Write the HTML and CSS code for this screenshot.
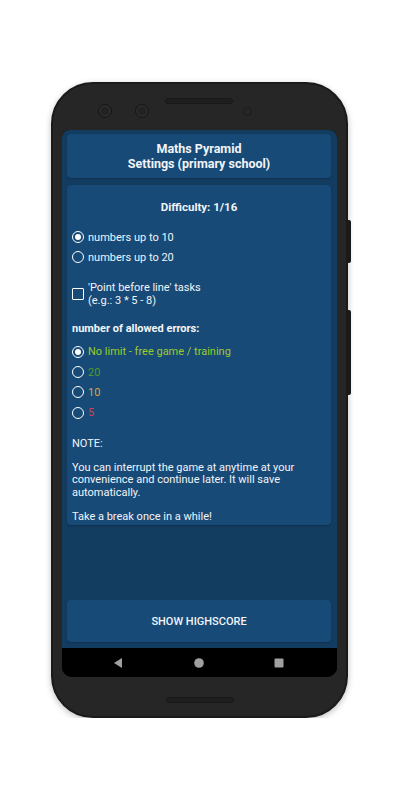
FILE: index.html
```html
<!DOCTYPE html>
<html lang="en">
<head>
  <meta charset="UTF-8">
  <meta name="viewport" content="width=device-width, initial-scale=1.0">
  <title>Maths Pyramid - Settings</title>
  <link rel="stylesheet" href="styles.css">
</head>
<body>

  <div class="phone">
    <div class="bezel-top">
      <span class="camera cam-one"></span>
      <span class="camera cam-two"></span>
      <span class="speaker"></span>
      <span class="sensor"></span>
    </div>

    <div class="screen">
      <div class="app">
        <div class="card header-card">
          <div>Maths Pyramid</div>
          <div>Settings (primary school)</div>
        </div>

        <div class="card settings-card">
          <div class="difficulty">Difficulty: 1/16</div>

          <div class="group range-group">
            <label class="option"><span class="radio checked"></span>numbers up to 10</label>
            <label class="option"><span class="radio"></span>numbers up to 20</label>
          </div>

          <label class="check-option">
            <span class="checkbox"></span>
            <span>'Point before line' tasks<br>(e.g.: 3 * 5 - 8)</span>
          </label>

          <div class="section-title">number of allowed errors:</div>

          <div class="group">
            <label class="option lime"><span class="radio checked"></span>No limit - free game / training</label>
            <label class="option green"><span class="radio"></span>20</label>
            <label class="option orange"><span class="radio"></span>10</label>
            <label class="option red"><span class="radio"></span>5</label>
          </div>

          <p class="note">NOTE:

You can interrupt the game at anytime at your convenience and continue later. It will save automatically.

Take a break once in a while!</p>
        </div>

        <div class="spacer"></div>

        <button class="card highscore-button">SHOW HIGHSCORE</button>
      </div>

      <div class="nav-bar">
        <svg class="nav-icon" width="12" height="12" viewBox="0 0 12 12"><path d="M10 1 L10 11 L2 6 Z" fill="#a0a0a0"/></svg>
        <svg class="nav-icon" width="12" height="12" viewBox="0 0 12 12"><circle cx="6" cy="6" r="4.8" fill="#a0a0a0"/></svg>
        <svg class="nav-icon" width="12" height="12" viewBox="0 0 12 12"><rect x="1.5" y="1.5" width="9" height="9" rx="1" fill="#a0a0a0"/></svg>
      </div>
    </div>

    <div class="bezel-bottom">
      <span class="speaker"></span>
    </div>
  </div>

</body>
</html>
```

FILE: styles.css
```css
/* Page and phone frame */
body {
  margin: 0;
  background-color: #fff;
  font-family: Roboto, "Noto Sans", sans-serif;
}

.phone {
  position: relative;
  width: 297px;
  height: 636px;
  margin: 82px 0 0 51px;
  padding: 0 9px;
  box-sizing: border-box;
  display: flex;
  flex-direction: column;
  background-color: #262626;
  border: 2px solid #1a1a1a;
  border-radius: 42px;
  box-shadow: 0 2px 6px rgba(0, 0, 0, 0.25);
}

/* side buttons */
.phone::before,
.phone::after {
  content: '';
  position: absolute;
  right: -5px;
  width: 3px;
  background-color: #1a1a1a;
  border-radius: 0 2px 2px 0;
}

.phone::before {
  top: 136px;
  height: 43px;
}

.phone::after {
  top: 226px;
  height: 85px;
}

.bezel-top {
  height: 46px;
  flex-shrink: 0;
  display: flex;
  align-items: flex-start;
}

.camera {
  width: 12px;
  height: 12px;
  margin-top: 20px;
  border-radius: 50%;
  border: 1px solid #161616;
  background-color: #222;
  box-shadow: inset 0 0 0 2px #2c2c2c;
}

.cam-one {
  margin-left: 36px;
}

.cam-two {
  margin-left: 23px;
}

.speaker {
  width: 68px;
  height: 6px;
  border-radius: 4px;
  background-color: #1e1e1e;
  border: 1px solid #181818;
  box-sizing: border-box;
}

.bezel-top .speaker {
  margin: 14px 0 0 16px;
}

.sensor {
  width: 9px;
  height: 9px;
  margin: 23px 0 0 10px;
  border-radius: 50%;
  border: 1px solid #1a1a1a;
  box-sizing: border-box;
}

.bezel-bottom {
  flex: 1;
  display: flex;
  justify-content: center;
  align-items: flex-start;
}

.bezel-bottom .speaker {
  margin-top: 20px;
}

/* Screen */
.screen {
  height: 547px;
  flex-shrink: 0;
  display: flex;
  flex-direction: column;
  background-color: #000;
  border-radius: 8px 8px 10px 10px;
  overflow: hidden;
}

.app {
  flex: 1;
  display: flex;
  flex-direction: column;
  gap: 7px;
  padding: 4px 6px 6px 5px;
  background-color: #133c61;
  color: #f2f4f7;
}

.card {
  background-color: #174a77;
  border-radius: 4px;
  box-shadow: 0 1px 2px rgba(0, 0, 0, 0.2);
}

.header-card {
  height: 44px;
  box-sizing: border-box;
  padding-top: 7px;
  font-size: 12.5px;
  font-weight: bold;
  line-height: 15px;
  text-align: center;
}

.settings-card {
  padding: 16px 5px 2px 5px;
  font-size: 11px;
  line-height: 13px;
}

.difficulty {
  font-size: 11.5px;
  font-weight: bold;
  text-align: center;
}

.group {
  margin-top: 7px;
}

.range-group {
  margin-top: 13px;
}

.option {
  height: 20.3px;
  display: flex;
  align-items: center;
  gap: 4px;
}

.radio {
  width: 12px;
  height: 12px;
  box-sizing: border-box;
  border: 1.6px solid #fff;
  border-radius: 50%;
  display: flex;
  align-items: center;
  justify-content: center;
}

.radio.checked::after {
  content: '';
  width: 6px;
  height: 6px;
  border-radius: 50%;
  background-color: #fff;
}

.lime {
  color: #9ccc2a;
}

.green {
  color: #4c9a2c;
}

.orange {
  color: #dda244;
}

.red {
  color: #d43f56;
}

.check-option {
  margin-top: 13px;
  display: flex;
  align-items: center;
  gap: 4px;
}

.checkbox {
  width: 12px;
  height: 12px;
  box-sizing: border-box;
  border: 1.6px solid #fff;
  border-radius: 1px;
}

.section-title {
  margin-top: 15px;
  font-size: 11px;
  font-weight: bold;
}

.note {
  margin: 15px 0 0;
  white-space: pre-line;
  line-height: 12.2px;
}

.spacer {
  flex: 1;
}

.highscore-button {
  height: 42px;
  border: none;
  color: #f2f4f7;
  font-family: Roboto, "Noto Sans", sans-serif;
  font-size: 11px;
  font-weight: 500;
  cursor: pointer;
}

/* Navigation bar */
.nav-bar {
  height: 29px;
  flex-shrink: 0;
  display: flex;
  justify-content: space-between;
  align-items: center;
  padding: 0 52px 0 50px;
  background-color: #000;
}
```
